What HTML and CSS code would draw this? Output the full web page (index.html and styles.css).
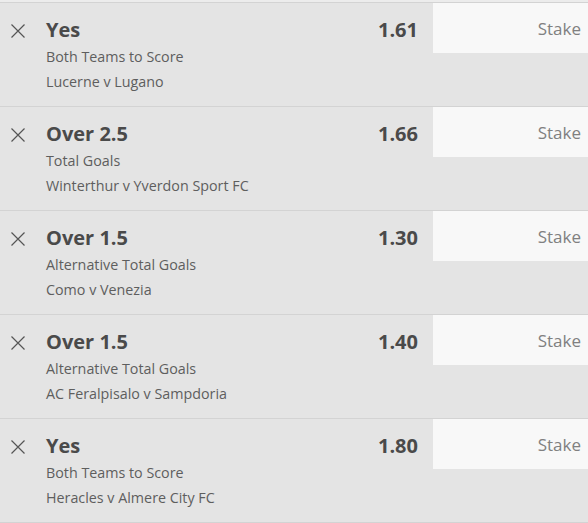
FILE: index.html
```html
<!DOCTYPE html>
<html>
<head>
<meta charset="utf-8">
<link rel="stylesheet" href="styles.css">
</head>
<body>
<div class="slip">
  <div class="bet">
    <button class="remove" aria-label="Remove"><svg viewBox="0 0 14 14" width="14" height="14"><path d="M0.5 0.5 L13.5 13.5 M13.5 0.5 L0.5 13.5"/></svg></button>
    <div class="info">
      <div class="sel">Yes</div>
      <div class="market">Both Teams to Score</div>
      <div class="event">Lucerne v Lugano</div>
    </div>
    <div class="odds">1.61</div>
    <div class="stake">Stake</div>
  </div>
  <div class="bet">
    <button class="remove" aria-label="Remove"><svg viewBox="0 0 14 14" width="14" height="14"><path d="M0.5 0.5 L13.5 13.5 M13.5 0.5 L0.5 13.5"/></svg></button>
    <div class="info">
      <div class="sel">Over 2.5</div>
      <div class="market">Total Goals</div>
      <div class="event">Winterthur v Yverdon Sport FC</div>
    </div>
    <div class="odds">1.66</div>
    <div class="stake">Stake</div>
  </div>
  <div class="bet">
    <button class="remove" aria-label="Remove"><svg viewBox="0 0 14 14" width="14" height="14"><path d="M0.5 0.5 L13.5 13.5 M13.5 0.5 L0.5 13.5"/></svg></button>
    <div class="info">
      <div class="sel">Over 1.5</div>
      <div class="market">Alternative Total Goals</div>
      <div class="event">Como v Venezia</div>
    </div>
    <div class="odds">1.30</div>
    <div class="stake">Stake</div>
  </div>
  <div class="bet">
    <button class="remove" aria-label="Remove"><svg viewBox="0 0 14 14" width="14" height="14"><path d="M0.5 0.5 L13.5 13.5 M13.5 0.5 L0.5 13.5"/></svg></button>
    <div class="info">
      <div class="sel">Over 1.5</div>
      <div class="market">Alternative Total Goals</div>
      <div class="event">AC Feralpisalo v Sampdoria</div>
    </div>
    <div class="odds">1.40</div>
    <div class="stake">Stake</div>
  </div>
  <div class="bet">
    <button class="remove" aria-label="Remove"><svg viewBox="0 0 14 14" width="14" height="14"><path d="M0.5 0.5 L13.5 13.5 M13.5 0.5 L0.5 13.5"/></svg></button>
    <div class="info">
      <div class="sel">Yes</div>
      <div class="market">Both Teams to Score</div>
      <div class="event">Heracles v Almere City FC</div>
    </div>
    <div class="odds">1.80</div>
    <div class="stake">Stake</div>
  </div>
</div>
</body>
</html>
```
FILE: styles.css
```css
html, body {
  margin: 0;
  padding: 0;
  background: #ececec;
  font-family: "Open Sans", "Noto Sans", sans-serif;
}
.slip {
  padding-top: 2px;
  display: flex;
  flex-direction: column;
}
.bet {
  display: flex;
  align-items: flex-start;
  height: 103px;
  background: #e4e4e4;
  border-top: 1px solid #d3d3d3;
}
.bet:last-child {
  border-bottom: 1px solid #d3d3d3;
}
.remove {
  flex: none;
  width: 46px;
  padding: 21px 0 0 11px;
  margin: 0;
  border: 0;
  background: none;
  text-align: left;
  display: flex;
}
.remove svg path {
  stroke: #555;
  stroke-width: 1.2;
  fill: none;
}
.info {
  flex: 1;
  padding-top: 15px;
  color: #5e5e5e;
}
.sel {
  font-size: 20px;
  font-weight: 700;
  color: #4a4a4a;
  line-height: 24px;
  margin-bottom: 2px;
}
.market, .event {
  font-size: 14.3px;
  line-height: 25px;
}
.odds {
  flex: none;
  padding-top: 15px;
  font-size: 20px;
  font-weight: 700;
  line-height: 24px;
  color: #4a4a4a;
  margin-right: 15px;
}
.stake {
  flex: none;
  width: 148px;
  height: 50px;
  padding-right: 7px;
  background: #f8f8f8;
  color: #808080;
  font-size: 17px;
  display: flex;
  align-items: center;
  justify-content: flex-end;
}
```
